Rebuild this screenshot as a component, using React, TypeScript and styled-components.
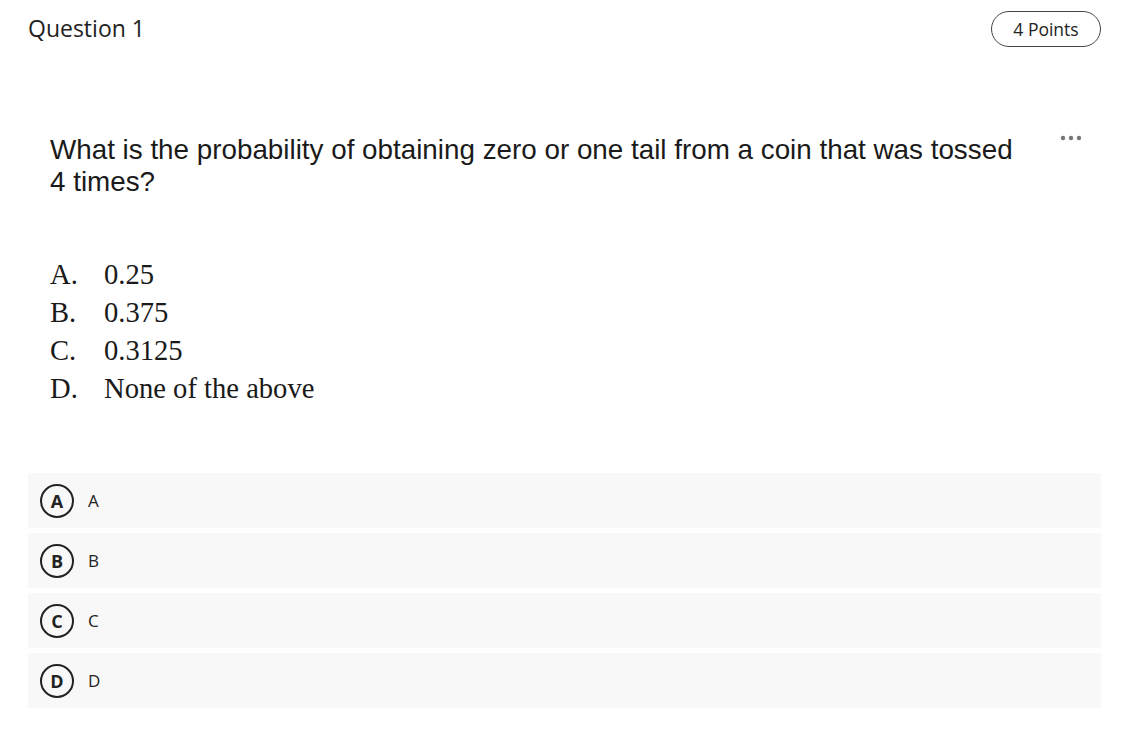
import React from 'react';
import styled, { createGlobalStyle } from 'styled-components';

const GlobalStyle = createGlobalStyle`
  html, body {
    margin: 0;
    padding: 0;
    background: #fff;
  }
  body {
    font-family: 'Open Sans', 'Liberation Sans', sans-serif;
    color: #222;
  }
`;

// Styles
const Page = styled.div`
  width: 1122px;
  padding: 11px 21px 0 28px;
  box-sizing: border-box;
`;

const Header = styled.div`
  display: flex;
  justify-content: space-between;
  align-items: flex-start;
`;

const Title = styled.h2`
  margin: 2px 0 0;
  font-size: 23px;
  font-weight: 400;
  line-height: 30px;
  color: #222;
`;

const PointsPill = styled.div`
  height: 36px;
  width: 110px;
  box-sizing: border-box;
  border: 1px solid #444;
  border-radius: 18px;
  display: flex;
  align-items: center;
  justify-content: center;
  font-size: 17.5px;
  color: #222;
`;

const Prompt = styled.div`
  display: flex;
  justify-content: space-between;
  align-items: flex-start;
  margin-top: 87px;
  padding-left: 22px;
`;

const Stem = styled.div`
  width: 980px;
  font-family: 'Liberation Sans', Arial, sans-serif;
  font-size: 27.8px;
  line-height: 32px;
  color: #1a1a1a;
`;

const MoreButton = styled.button`
  border: none;
  background: none;
  padding: 0;
  margin: 1px 19px 0 0;
  display: flex;
  color: #777;
`;

const ChoiceList = styled.ol`
  list-style: none;
  margin: 58px 0 0;
  padding: 0 0 0 22px;
  font-family: 'Liberation Serif', 'Times New Roman', serif;
  font-size: 28.6px;
  color: #1a1a1a;
`;

const ChoiceItem = styled.li`
  display: flex;
  height: 38px;
  align-items: center;
`;

const ChoiceMark = styled.span`
  width: 54px;
`;

const Answers = styled.div`
  display: flex;
  flex-direction: column;
  gap: 5px;
  margin-top: 65px;
`;

const AnswerRow = styled.div`
  height: 55px;
  background: #f8f8f8;
  display: flex;
  align-items: center;
  padding-left: 12px;
`;

const Bubble = styled.span`
  width: 34px;
  height: 34px;
  box-sizing: border-box;
  border: 2px solid #222;
  border-radius: 50%;
  display: flex;
  align-items: center;
  justify-content: center;
  font-size: 18px;
  font-weight: 700;
  color: #222;
`;

const AnswerLabel = styled.span`
  margin-left: 14px;
  font-size: 17px;
  color: #222;
`;

const choices = [
  { mark: 'A.', text: '0.25' },
  { mark: 'B.', text: '0.375' },
  { mark: 'C.', text: '0.3125' },
  { mark: 'D.', text: 'None of the above' },
];

const App: React.FC = () => {
  return (
    <>
      <GlobalStyle />
      <Page>
        <Header>
          <Title>Question 1</Title>
          <PointsPill>4 Points</PointsPill>
        </Header>

        <Prompt>
          <Stem>
            What is the probability of obtaining zero or one tail from a coin that was tossed 4 times?
          </Stem>
          <MoreButton aria-label="More options">
            <svg width="22" height="6" viewBox="0 0 22 6">
              <circle cx="3" cy="3" r="2.2" fill="currentColor" />
              <circle cx="11" cy="3" r="2.2" fill="currentColor" />
              <circle cx="19" cy="3" r="2.2" fill="currentColor" />
            </svg>
          </MoreButton>
        </Prompt>

        <ChoiceList>
          {choices.map((c) => (
            <ChoiceItem key={c.mark}>
              <ChoiceMark>{c.mark}</ChoiceMark>
              {c.text}
            </ChoiceItem>
          ))}
        </ChoiceList>

        <Answers>
          {['A', 'B', 'C', 'D'].map((letter) => (
            <AnswerRow key={letter}>
              <Bubble>{letter}</Bubble>
              <AnswerLabel>{letter}</AnswerLabel>
            </AnswerRow>
          ))}
        </Answers>
      </Page>
    </>
  );
};

export default App;
